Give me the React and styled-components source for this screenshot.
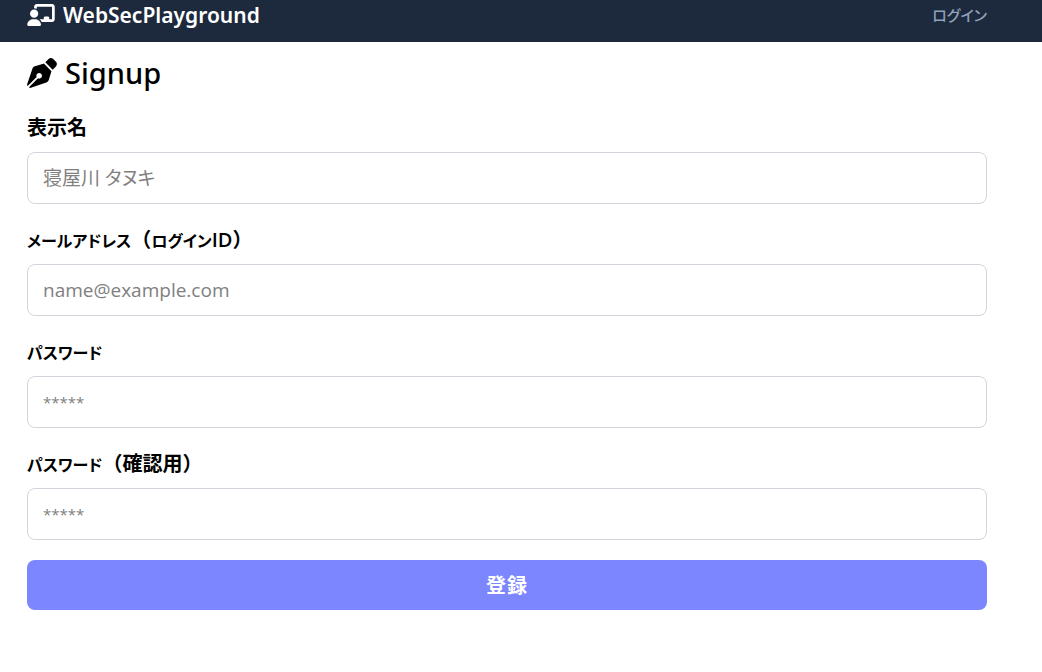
import React from "react";
import styled, { createGlobalStyle } from "styled-components";
import { FaChalkboardUser, FaPenNib } from "react-icons/fa6";

const GlobalStyle = createGlobalStyle`
  *, *::before, *::after { box-sizing: border-box; }
  body {
    margin: 0;
    background: #ffffff;
    color: #000000;
    font-family: "Open Sans", "Noto Sans CJK JP", sans-serif;
    font-size: 20px;
    line-height: 30px;
  }
`;

const Header = styled.header`
  background: #1d293d;
`;

const HeaderInner = styled.div`
  display: flex;
  align-items: center;
  justify-content: space-between;
  padding: 0 55px 12px 27px;
`;

const Brand = styled.a`
  display: flex;
  align-items: center;
  gap: 8px;
  color: #ffffff;
  font-family: "Noto Sans", sans-serif;
  font-size: 21px;
  font-weight: 600;
  text-decoration: none;
`;

const BrandIcon = styled(FaChalkboardUser)`
  width: 28px;
  height: 22px;
`;

const LoginLink = styled.a`
  color: #90a1b9;
  font-size: 15px;
  font-weight: 500;
  font-feature-settings: "palt";
  text-decoration: none;
`;

const Main = styled.main`
  padding: 11px 55px 60px 27px;
`;

const Title = styled.h1`
  display: flex;
  align-items: center;
  gap: 8px;
  margin: 0 0 19px;
  font-family: "Noto Sans", sans-serif;
  font-size: 29px;
  line-height: 40px;
  font-weight: 500;
`;

const TitleIcon = styled(FaPenNib)`
  width: 30px;
  height: 30px;
`;

const Form = styled.form`
  display: flex;
  flex-direction: column;
  gap: 20px;
`;

const Field = styled.div`
  display: flex;
  flex-direction: column;
  gap: 10px;
`;

const Label = styled.label`
  height: 30px;
  font-size: 20px;
  line-height: 32px;
  font-weight: 600;
`;

const Kana = styled.span`
  font-size: 16px;
  font-feature-settings: "palt";
`;

const Input = styled.input`
  width: 100%;
  height: 52px;
  padding: 0 15px;
  border: 1px solid #d1d5dc;
  border-radius: 8px;
  background: #ffffff;
  color: #000000;
  font: inherit;
  font-size: ${(p) => (p.type === "password" ? "15px" : "19px")};
  font-feature-settings: "palt";
  &::placeholder {
    color: #808080;
    opacity: 1;
  }
`;

const SubmitButton = styled.button`
  height: 50px;
  padding: 2px 0 0;
  border: 0;
  border-radius: 8px;
  background: #7c86ff;
  color: #ffffff;
  font: inherit;
  font-weight: 700;
  letter-spacing: 1px;
`;

const fields = [
  { id: "name", label: "表示名", type: "text", placeholder: "寝屋川 タヌキ" },
  {
    id: "email",
    label: (
      <>
        <Kana>メールアドレス</Kana>（<Kana>ログイン</Kana>ID）
      </>
    ),
    type: "email",
    placeholder: "name@example.com",
  },
  { id: "password", label: <Kana>パスワード</Kana>, type: "password", placeholder: "*****" },
  {
    id: "confirm",
    label: (
      <>
        <Kana>パスワード</Kana>（確認用）
      </>
    ),
    type: "password",
    placeholder: "*****",
  },
];

export default function App() {
  return (
    <>
      <GlobalStyle />
      <Header>
        <HeaderInner>
          <Brand href="#">
            <BrandIcon aria-hidden="true" />
            WebSecPlayground
          </Brand>
          <LoginLink href="#login">ログイン</LoginLink>
        </HeaderInner>
      </Header>
      <Main>
        <Title>
          <TitleIcon aria-hidden="true" />
          Signup
        </Title>
        <Form>
          {fields.map((f) => (
            <Field key={f.id}>
              <Label htmlFor={f.id}>{f.label}</Label>
              <Input id={f.id} type={f.type} placeholder={f.placeholder} />
            </Field>
          ))}
          <SubmitButton type="button">登録</SubmitButton>
        </Form>
      </Main>
    </>
  );
}
